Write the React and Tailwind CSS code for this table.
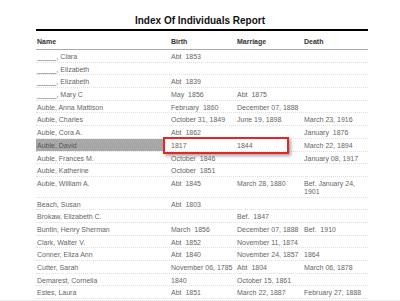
const ROWS = [
  ["_____, Clara", "Abt\u00a0 1853", "", ""],
  ["_____, Elizabeth", "", "", ""],
  ["_____, Elizabeth", "Abt\u00a0 1839", "", ""],
  ["_____, Mary C", "May\u00a0 1856", "Abt\u00a0 1875", ""],
  ["Auble, Anna Mattison", "February\u00a0 1860", "December 07, 1888", ""],
  ["Auble, Charles", "October 31, 1849", "June 19, 1898", "March 23, 1916"],
  ["Auble, Cora A.", "Abt\u00a0 1862", "", "January\u00a0 1876"],
  ["Auble, David", "1817", "1844", "March 22, 1894", true],
  ["Auble, Frances M.", "October\u00a0 1846", "", "January 08, 1917"],
  ["Auble, Katherine", "October\u00a0 1851", "", ""],
  ["Auble, William A.", "Abt\u00a0 1845", "March 28, 1880", "Bef. January 24, 1901"],
  ["Beach, Susan", "Abt\u00a0 1803", "", ""],
  ["Brokaw, Elizabeth C.", "", "Bef.\u00a0 1847", ""],
  ["Buntin, Henry Sherman", "March\u00a0 1856", "December 07, 1888", "Bef.\u00a0 1910"],
  ["Clark, Walter V.", "Abt\u00a0 1852", "November 11, 1874", ""],
  ["Conner, Eliza Ann", "Abt\u00a0 1840", "November 24, 1857", "1864"],
  ["Cutter, Sarah", "November 06, 1785", "Abt\u00a0 1804", "March 06, 1878"],
  ["Demarest, Cornelia", "1840", "October 15, 1861", ""],
  ["Estes, Laura", "Abt\u00a0 1851", "March 22, 1887", "February 27, 1888"],
];

function Row({ name, birth, marriage, death, marked }) {
  return (
    <div className="relative grid grid-cols-[134px_66px_67px_65px] border-b border-dotted border-[#dedede] text-[7px] leading-[8px] text-[#666]">
      <div className={marked ? "mr-[7px] bg-[#a8a8a8] pl-[1px] pt-[3px] pb-[0.7px] text-[#555]" : "pl-[1px] pt-[3px] pb-[0.7px]"}>
        {name}
      </div>
      <div className="pl-[1px] pt-[3px] pb-[0.7px] whitespace-nowrap">{birth}</div>
      <div className="pl-[1px] pt-[3px] pb-[0.7px] whitespace-nowrap">{marriage}</div>
      <div className="pl-[1px] pt-[3px] pb-[0.7px]">{death}</div>
      {marked && (
        <div className="absolute left-[127px] top-[-2px] w-[126px] h-[17px] border-2 border-[#e52622] shadow-[2px_2px_3px_rgba(0,0,0,0.35)]" />
      )}
    </div>
  );
}

export default function App() {
  return (
    <div className="w-[400px] h-[301px] overflow-hidden bg-white flex flex-col font-['Liberation_Sans',Arial,sans-serif]">
      <h1 className="pt-[15px] text-center text-[10px] leading-[12px] font-bold text-[#111]">
        Index Of Individuals Report
      </h1>

      <div className="ml-[36px] w-[332px] mt-[2px] h-[2px] bg-black" />

      <div className="ml-[36px] w-[332px]">
        {/* header */}
        <div className="grid grid-cols-[134px_66px_67px_65px] pt-[7px] pb-[3px] border-b border-[#aaa] text-[7px] leading-[8px] font-bold text-[#333]">
          <div className="pl-[1px]">Name</div>
          <div className="pl-[1px]">Birth</div>
          <div className="pl-[1px]">Marriage</div>
          <div className="pl-[1px]">Death</div>
        </div>

        {ROWS.map(([name, birth, marriage, death, marked], i) => (
          <Row key={i} name={name} birth={birth} marriage={marriage} death={death} marked={marked} />
        ))}
      </div>

      <div className="flex-1 mt-[1px] bg-[#eeeeee]" />
    </div>
  );
}
